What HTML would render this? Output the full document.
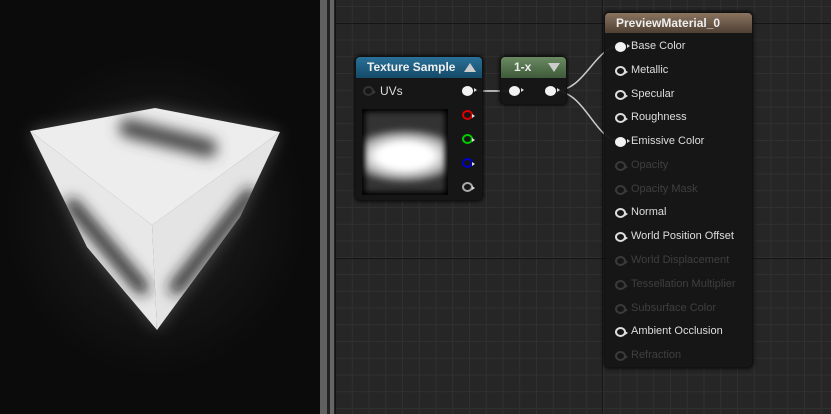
<!DOCTYPE html>
<html><head><meta charset="utf-8"><style>
*{margin:0;padding:0;box-sizing:border-box}
body{width:831px;height:414px;overflow:hidden;background:#000;font-family:"Liberation Sans",sans-serif;position:relative}
#left{position:absolute;left:0;top:0;width:320px;height:414px;background:radial-gradient(ellipse 150px 160px at 155px 215px,#2a2a2a 0%,#141414 60%,#0b0b0b 100%)}
#split{position:absolute;left:320px;top:0;width:15px;height:414px;background:#232323}
#split:before{content:"";position:absolute;left:0;top:0;width:7px;height:414px;background:#606060}
#split:after{content:"";position:absolute;left:10px;top:0;width:4px;height:414px;background:#666}
#graph{position:absolute;left:335px;top:0;width:496px;height:414px;background-color:#262626;
background-image:linear-gradient(#303030 1px,transparent 1px),linear-gradient(90deg,#303030 1px,transparent 1px);
background-size:16.75px 16.75px;background-position:0 6px}
.maj{position:absolute;background:#151515}
.node{position:absolute;background:rgba(22,22,22,0.96);border-radius:5px;box-shadow:0 0 4px #000;border:1px solid #111}
.hdr{height:21px;border-radius:4px 4px 0 0;color:#eee;font-size:12px;font-weight:bold;line-height:21px;padding-left:11px}
.row{position:absolute;font-size:11px;color:#ddd;white-space:nowrap}
.row.d{color:#3f3f3f}
.pin{position:absolute;width:11px;height:10px;border-radius:50%}
.pin:after{content:"";position:absolute;right:-4px;top:2px;border-top:2px solid transparent;border-bottom:2px solid transparent;border-left:3px solid #ddd}
.pf{background:#f2f2f2}
.po{border:2px solid #ddd}
.pd{border:2px solid #3a3a3a}
.pd:after{border-left-color:#3a3a3a}
</style></head><body>
<div id="left">
<svg width="320" height="414" style="position:absolute;left:0;top:0">
<defs>
<filter id="b" filterUnits="userSpaceOnUse" x="0" y="0" width="320" height="414"><feGaussianBlur stdDeviation="7"/></filter>
<filter id="g" filterUnits="userSpaceOnUse" x="0" y="0" width="320" height="414"><feGaussianBlur stdDeviation="8"/></filter>
<clipPath id="ct"><polygon points="30,131 155,108 280,132 152,225"/></clipPath>
<clipPath id="cl"><polygon points="30,131 152,225 157,330 87,247"/></clipPath>
<clipPath id="cr"><polygon points="152,225 280,132 240,217 157,330"/></clipPath>
</defs>
<polygon points="30,131 155,108 280,132 240,217 157,330 87,247" fill="#888" filter="url(#g)" opacity="0.45"/>
<polygon points="30,131 155,108 280,132 152,225" fill="#ededed"/>
<polygon points="30,131 152,225 157,330 87,247" fill="#e8e8e8"/>
<polygon points="152,225 280,132 240,217 157,330" fill="#e4e4e4"/>
<g clip-path="url(#ct)"><line x1="128" y1="128" x2="208" y2="148" stroke="#444" stroke-width="18" stroke-linecap="round" filter="url(#b)"/></g>
<g clip-path="url(#cl)"><line x1="72" y1="205" x2="142" y2="288" stroke="#1a1a1a" stroke-width="13" stroke-linecap="round" filter="url(#b)"/></g>
<g clip-path="url(#cr)"><line x1="250" y1="195" x2="176" y2="288" stroke="#1a1a1a" stroke-width="13" stroke-linecap="round" filter="url(#b)"/></g>
</svg>
</div>
<div id="split"></div>
<div id="graph"></div>
<div class="maj" style="left:335px;top:0;width:1px;height:414px"></div>
<div class="maj" style="left:602px;top:0;width:1px;height:414px"></div>
<div class="maj" style="left:335px;top:23px;width:496px;height:1px"></div>
<div class="maj" style="left:335px;top:258px;width:496px;height:1px"></div>

<svg width="831" height="414" style="position:absolute;left:0;top:0;z-index:1">
<path d="M472 91 L513 91" stroke="#ddd" stroke-width="1.5" fill="none"/>
<path d="M555 91 C585 91,595 46,620 46" stroke="#ccc" stroke-width="1.5" fill="none"/>
<path d="M555 91 C585 91,595 141,620 141" stroke="#ccc" stroke-width="1.5" fill="none"/>
</svg>

<div class="node" style="left:355px;top:56px;width:128px;height:145px;z-index:2">
<div class="hdr" style="background:linear-gradient(#2a7199,#144a68)">Texture Sample<span style="position:absolute;right:6px;top:6px;width:0;height:0;border-left:6px solid transparent;border-right:6px solid transparent;border-bottom:9px solid #ccc"></span></div>
<div class="pin pd" style="left:7px;top:29px;border-color:#333"></div>
<div class="row" style="left:24px;top:27px;font-size:12px">UVs</div>
<div class="pin pf" style="left:106px;top:29px"></div>
<div class="pin" style="left:106px;top:53px;border:2px solid #d00"></div>
<div class="pin" style="left:106px;top:77px;border:2px solid #0c0"></div>
<div class="pin" style="left:106px;top:101px;border:2px solid #00c"></div>
<div class="pin po" style="left:106px;top:125px;border-color:#aaa"></div>
<div style="position:absolute;left:6px;top:52px;width:86px;height:86px;background:#000;overflow:hidden">
<div style="position:absolute;left:3px;top:3px;width:80px;height:80px;background:radial-gradient(ellipse 60px 28px at 40px 44px,#fff 45%,#aaa 75%,#333 100%);filter:blur(3px)"></div></div>
</div>

<div class="node" style="left:500px;top:56px;width:67px;height:49px;z-index:2">
<div class="hdr" style="background:linear-gradient(#6b8a62,#3e5a3a);padding-left:13px">1-x<span style="position:absolute;right:6px;top:6px;width:0;height:0;border-left:6px solid transparent;border-right:6px solid transparent;border-top:9px solid #ccc"></span></div>
<div class="pin pf" style="left:8px;top:29px"></div>
<div class="pin pf" style="left:44px;top:29px"></div>
</div>

<div class="node" style="left:604px;top:12px;width:149px;height:356px;z-index:2">
<div class="hdr" style="background:linear-gradient(#8a7460,#4e4034);height:20px;line-height:20px">PreviewMaterial_0</div>
<div class="pin pf" style="left:10px;top:29px"></div><div class="row" style="left:26px;top:27px">Base Color</div>
<div class="pin po" style="left:10px;top:53px"></div><div class="row" style="left:26px;top:51px">Metallic</div>
<div class="pin po" style="left:10px;top:77px"></div><div class="row" style="left:26px;top:75px">Specular</div>
<div class="pin po" style="left:10px;top:100px"></div><div class="row" style="left:26px;top:98px">Roughness</div>
<div class="pin pf" style="left:10px;top:124px"></div><div class="row" style="left:26px;top:122px">Emissive Color</div>
<div class="pin pd" style="left:10px;top:148px"></div><div class="row d" style="left:26px;top:146px">Opacity</div>
<div class="pin pd" style="left:10px;top:172px"></div><div class="row d" style="left:26px;top:170px">Opacity Mask</div>
<div class="pin po" style="left:10px;top:195px"></div><div class="row" style="left:26px;top:193px">Normal</div>
<div class="pin po" style="left:10px;top:219px"></div><div class="row" style="left:26px;top:217px">World Position Offset</div>
<div class="pin pd" style="left:10px;top:243px"></div><div class="row d" style="left:26px;top:241px">World Displacement</div>
<div class="pin pd" style="left:10px;top:267px"></div><div class="row d" style="left:26px;top:265px">Tessellation Multiplier</div>
<div class="pin pd" style="left:10px;top:291px"></div><div class="row d" style="left:26px;top:289px">Subsurface Color</div>
<div class="pin po" style="left:10px;top:314px"></div><div class="row" style="left:26px;top:312px">Ambient Occlusion</div>
<div class="pin pd" style="left:10px;top:338px"></div><div class="row d" style="left:26px;top:336px">Refraction</div>
</div>
</body></html>
